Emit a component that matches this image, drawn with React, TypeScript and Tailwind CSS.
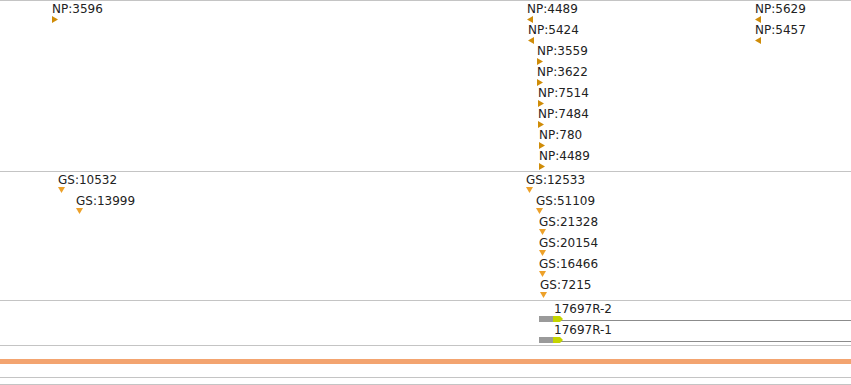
type Dir = "right" | "left" | "down";

type Feature = { label: string; x: number; row: number; dir: Dir };

const npFeatures: Feature[] = [
  { label: "NP:3596", x: 52, row: 0, dir: "right" },
  { label: "NP:4489", x: 527, row: 0, dir: "left" },
  { label: "NP:5424", x: 528, row: 1, dir: "left" },
  { label: "NP:3559", x: 537, row: 2, dir: "right" },
  { label: "NP:3622", x: 537, row: 3, dir: "right" },
  { label: "NP:7514", x: 538, row: 4, dir: "right" },
  { label: "NP:7484", x: 538, row: 5, dir: "right" },
  { label: "NP:780", x: 539, row: 6, dir: "right" },
  { label: "NP:4489", x: 539, row: 7, dir: "right" },
  { label: "NP:5629", x: 755, row: 0, dir: "left" },
  { label: "NP:5457", x: 755, row: 1, dir: "left" },
];

const gsFeatures: Feature[] = [
  { label: "GS:10532", x: 58, row: 0, dir: "down" },
  { label: "GS:13999", x: 76, row: 1, dir: "down" },
  { label: "GS:12533", x: 526, row: 0, dir: "down" },
  { label: "GS:51109", x: 536, row: 1, dir: "down" },
  { label: "GS:21328", x: 539, row: 2, dir: "down" },
  { label: "GS:20154", x: 539, row: 3, dir: "down" },
  { label: "GS:16466", x: 539, row: 4, dir: "down" },
  { label: "GS:7215", x: 540, row: 5, dir: "down" },
];

const transcripts = [
  { label: "17697R-2", row: 0 },
  { label: "17697R-1", row: 1 },
];

function Marker({ dir }: { dir: Dir }) {
  if (dir === "down") {
    return (
      <svg width="7" height="6" viewBox="0 0 7 6" className="block">
        <polygon points="0,0 7,0 3.5,6" fill="#eda12a" />
      </svg>
    );
  }
  return (
    <svg width="6" height="7" viewBox="0 0 6 7" className="block">
      {dir === "right" ? (
        <polygon points="0,0 6,3.5 0,7" fill="#cf8c08" />
      ) : (
        <polygon points="6,0 0,3.5 6,7" fill="#cf8c08" />
      )}
    </svg>
  );
}

// a feature is a label with its strand marker under it, placed at its genome position
function FeatureLabel({ f, top }: { f: Feature; top: number }) {
  return (
    <div
      className="absolute flex flex-col text-[12px] leading-[14px] text-[#222]"
      style={{ left: f.x, top: f.row * 21 + top }}
    >
      <span className="whitespace-nowrap">{f.label}</span>
      <Marker dir={f.dir} />
    </div>
  );
}

export default function App() {
  return (
    <div
      className="w-[851px] h-[385px] overflow-hidden bg-white"
      style={{ fontFamily: '"DejaVu Sans", Verdana, sans-serif' }}
    >
      {/* NP track */}
      <div className="relative h-[171px] border-t border-[#c4c4c4]">
        {npFeatures.map((f, i) => (
          <FeatureLabel key={i} f={f} top={1} />
        ))}
      </div>

      {/* GS track */}
      <div className="relative h-[129px] border-t border-[#c4c4c4]">
        {gsFeatures.map((f, i) => (
          <FeatureLabel key={i} f={f} top={1} />
        ))}
      </div>

      {/* transcripts */}
      <div className="relative h-[46px] border-y border-[#c4c4c4] pt-px">
        {transcripts.map((t) => (
          <div key={t.label} className="h-[21px] flex flex-col">
            <span className="pl-[554px] whitespace-nowrap text-[12px] leading-[14px] text-[#222]">
              {t.label}
            </span>
            <div className="relative pl-[539px] flex items-center h-[6px]">
              <div className="absolute left-[539px] right-0 top-[4px] h-px bg-[#8c8c8c]" />
              <div className="relative w-[14px] h-[6px] bg-[#9a9a9a]" />
              <svg width="10" height="6" viewBox="0 0 10 6" className="relative block">
                <polygon points="0,0 7,0 10,3 7,6 0,6" fill="#c4d400" />
              </svg>
            </div>
          </div>
        ))}
      </div>

      {/* overview strip */}
      <div className="pt-[13px]">
        <div className="h-[5px] bg-[#f3a470]" />
        <div className="h-[13px]" />
        <div className="h-px bg-[#c4c4c4]" />
        <div className="h-[6px]" />
        <div className="h-px bg-[#c4c4c4]" />
      </div>
    </div>
  );
}
